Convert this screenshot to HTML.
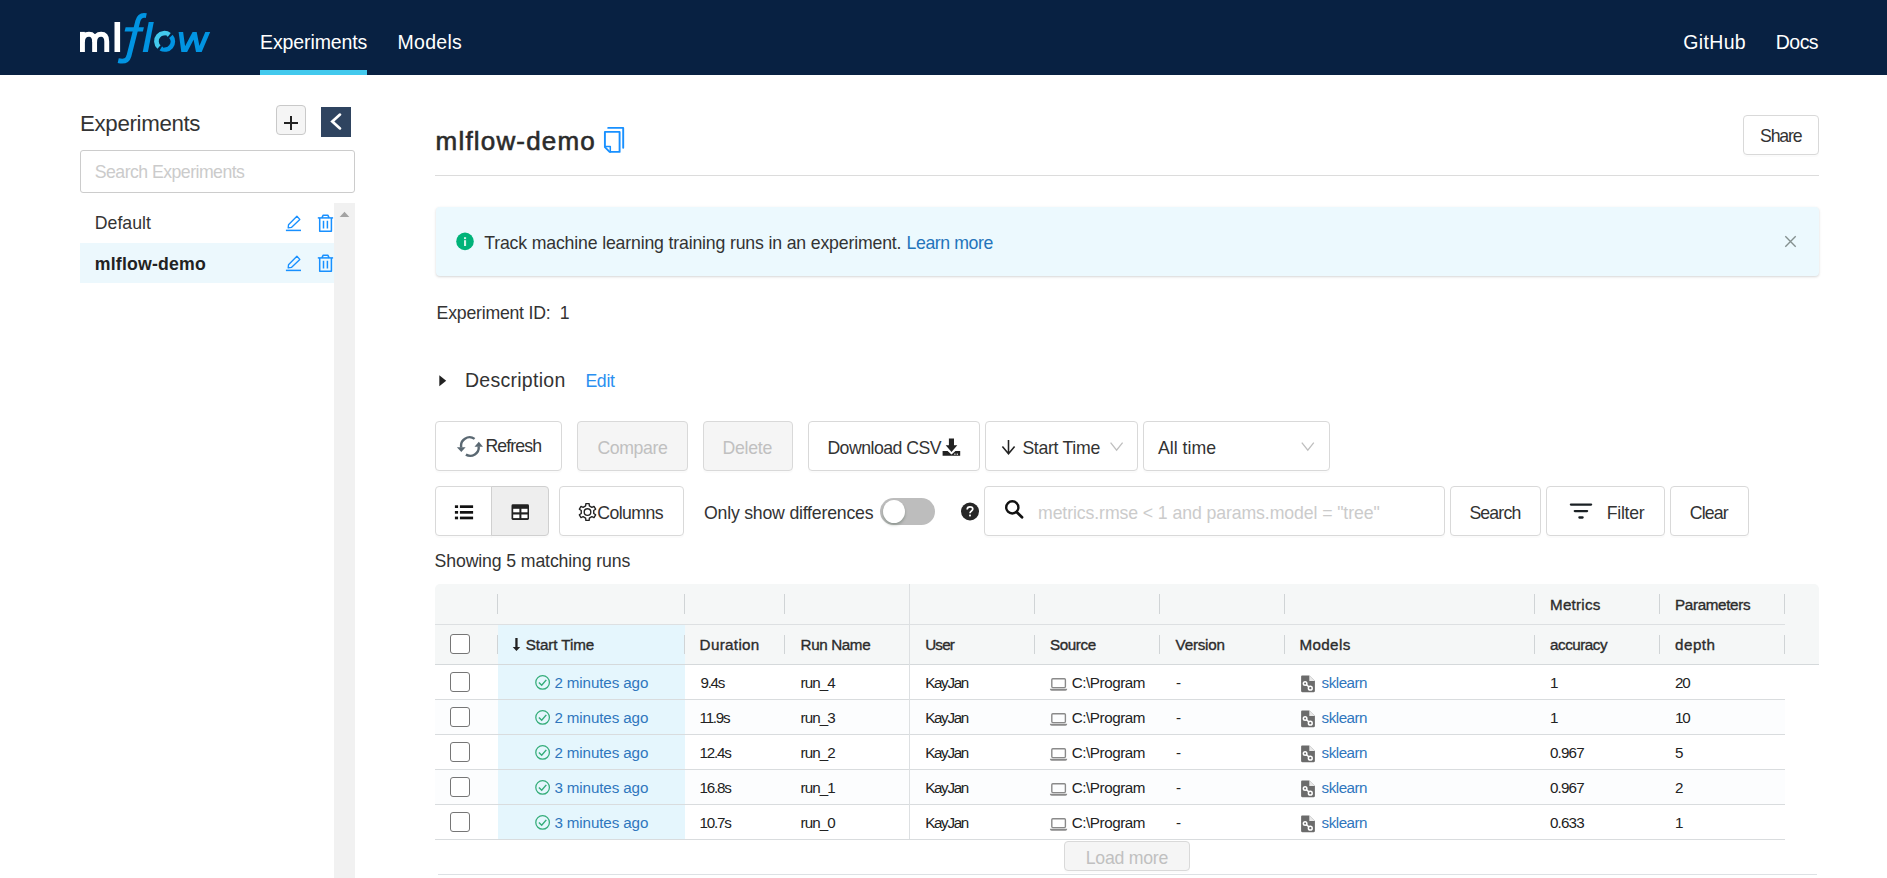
<!DOCTYPE html>
<html>
<head>
<meta charset="utf-8">
<title>MLflow</title>
<style>
*{box-sizing:border-box;margin:0;padding:0}
html,body{width:1887px;height:878px;overflow:hidden;background:#fff}
body{font-family:"Liberation Sans",sans-serif;color:#333;position:relative;font-size:17px}
.abs{position:absolute}
.t{position:absolute;white-space:nowrap;line-height:1}
/* header */
#hdr{left:0;top:0;width:1887px;height:75px;background:#082142}
.nav{color:#fff;font-size:19.4px}
#navline{left:260px;top:70px;width:107px;height:5px;background:#43c9ed}
/* sidebar */
#sbtitle{font-size:23.6px;color:#333}
#plus{left:276px;top:105px;width:30px;height:30px;border:1px solid #c9c9c9;border-radius:4px;background:#f5f5f5}
#coll{left:321px;top:107px;width:30px;height:30px;background:#2f4460}
#sbsearch{left:80px;top:150px;width:275px;height:43px;border:1px solid #ccc;border-radius:3px;background:#fff}
#sbtrack{left:334px;top:203px;width:21px;height:675px;background:#f1f1f1}
#sbactive{left:80px;top:243px;width:254px;height:40px;background:#ecf8fd}
/* main */
#title{font-size:26px;font-weight:normal;color:#2b2b2b;-webkit-text-stroke:0.6px #2b2b2b}
#hr1{left:435px;top:175px;width:1384px;height:1px;background:#dcdcdc}
#alert{left:435.5px;top:207px;width:1383px;height:69px;background:#ecf9fe;border-radius:4px;box-shadow:0 1px 2.5px rgba(0,0,0,.17)}
.btn{position:absolute;border:1px solid #d9d9d9;border-radius:4px;background:#fff;box-shadow:0 2px 0 rgba(0,0,0,.015)}
.btn.dis{background:#f5f5f5}
.dis-t{color:#c0c0c0}
.ph{color:#cbcbcb}
a,.lnk{color:#2a8ff0;text-decoration:none}
/* table */
#thead{left:435px;top:584px;width:1384px;height:80px;background:#f5f7f7;border-top-left-radius:5px;border-top-right-radius:5px}
.vsep{position:absolute;width:1px;background:#d0d4d6}
.hline{position:absolute;height:1px;background:#d9dcde}
.th{font-size:14.2px;font-weight:normal;color:#2c2c2c;-webkit-text-stroke:0.35px #2c2c2c}
.td{font-size:14px;color:#222}
.tl{color:#2f76bd}
.cb{position:absolute;width:20px;height:20px;border:1.5px solid #767676;border-radius:3px;background:#fff}
.odd{position:absolute;left:435px;width:1350px;height:34px;background:#fcfdfe}
/*CAL*/
#n1{left:260.00px !important;top:33.02px !important;font-size:19.5px !important;letter-spacing:-0.100px}
#n2{left:397.60px !important;top:33.02px !important;font-size:19.5px !important;letter-spacing:0.280px}
#n3{left:1683.19px !important;top:33.02px !important;font-size:19.5px !important;letter-spacing:0.360px}
#n4{left:1775.79px !important;top:33.02px !important;font-size:19.5px !important;letter-spacing:-0.533px}
#sbtitle{left:80.00px !important;top:113.02px !important;font-size:22.3px !important;letter-spacing:-0.340px}
#sbph{left:94.79px !important;top:164.02px !important;font-size:17.7px !important;letter-spacing:-0.535px}
#sb1{left:94.79px !important;top:215.02px !important;font-size:17.7px !important;letter-spacing:0.000px}
#sb2{left:94.79px !important;top:256.02px !important;font-size:17.7px !important;letter-spacing:0.200px}
#title{left:435.60px !important;top:128.02px !important;font-size:26px !important;letter-spacing:1.180px}
#share{left:1760.00px !important;top:128.02px !important;font-size:17.7px !important;letter-spacing:-1.150px}
#expid{left:436.60px !important;top:305.02px !important;font-size:17.7px !important;letter-spacing:-0.225px}
#desc{left:465.00px !important;top:371.02px !important;font-size:19.5px !important;letter-spacing:0.270px}
#edit{left:585.39px !important;top:373.02px !important;font-size:17.7px !important;letter-spacing:-0.300px}
#showing{left:434.60px !important;top:553.02px !important;font-size:17.7px !important;letter-spacing:-0.132px}
#b_refresh{left:485.39px !important;top:438.02px !important;font-size:17.7px !important;letter-spacing:-0.883px}
#b_compare{left:597.39px !important;top:440.02px !important;font-size:17.7px !important;letter-spacing:-0.367px}
#b_delete{left:722.39px !important;top:440.02px !important;font-size:17.7px !important;letter-spacing:-0.240px}
#b_dl{left:827.39px !important;top:440.02px !important;font-size:17.7px !important;letter-spacing:-0.527px}
#s_start{left:1022.39px !important;top:440.02px !important;font-size:17.7px !important;letter-spacing:-0.300px}
#s_all{left:1158.00px !important;top:440.02px !important;font-size:17.7px !important;letter-spacing:0.000px}
#b_cols{left:597.19px !important;top:505.02px !important;font-size:17.7px !important;letter-spacing:-0.583px}
#osd{left:704.00px !important;top:505.02px !important;font-size:17.7px !important;letter-spacing:-0.210px}
#ph2{left:1038.00px !important;top:505.02px !important;font-size:17.7px !important;letter-spacing:-0.100px}
#b_search{left:1469.39px !important;top:505.02px !important;font-size:17.7px !important;letter-spacing:-0.840px}
#b_filter{left:1606.79px !important;top:505.02px !important;font-size:17.7px !important;letter-spacing:-0.300px}
#b_clear{left:1689.79px !important;top:505.02px !important;font-size:17.7px !important;letter-spacing:-0.875px}
#loadmore{left:1085.79px !important;top:850.02px !important;font-size:17.7px !important;letter-spacing:-0.250px}
#altxt{left:484.19px !important;top:235.02px !important;font-size:17.7px !important;letter-spacing:-0.164px}
#learn{left:906.60px !important;top:235.02px !important;font-size:17.7px !important;letter-spacing:-0.411px}
#h_metrics{left:1550.00px !important;top:597.02px !important;font-size:15.2px !important;letter-spacing:0.233px}
#h_params{left:1675.00px !important;top:597.02px !important;font-size:15.2px !important;letter-spacing:-0.333px}
#h_start{left:525.79px !important;top:637.02px !important;font-size:15.2px !important;letter-spacing:-0.078px}
#h_dur{left:699.60px !important;top:637.02px !important;font-size:15.2px !important;letter-spacing:0.329px}
#h_run{left:800.60px !important;top:637.02px !important;font-size:15.2px !important;letter-spacing:-0.371px}
#h_user{left:925.19px !important;top:637.02px !important;font-size:15.2px !important;letter-spacing:-0.800px}
#h_src{left:1050.00px !important;top:637.02px !important;font-size:15.2px !important;letter-spacing:-0.400px}
#h_ver{left:1175.60px !important;top:637.02px !important;font-size:15.2px !important;letter-spacing:-0.217px}
#h_mod{left:1299.39px !important;top:637.02px !important;font-size:15.2px !important;letter-spacing:0.400px}
#h_acc{left:1550.00px !important;top:637.02px !important;font-size:15.2px !important;letter-spacing:-0.457px}
#h_depth{left:1675.00px !important;top:637.02px !important;font-size:15.2px !important;letter-spacing:0.500px}
#r0_min{left:554.39px !important;top:675.02px !important;font-size:15.2px !important;letter-spacing:-0.117px}
#r0_run{left:800.60px !important;top:675.02px !important;font-size:15.2px !important;letter-spacing:-0.950px}
#r0_user{left:925.19px !important;top:675.02px !important;font-size:15.2px !important;letter-spacing:-1.320px}
#r0_sk{left:1321.60px !important;top:675.02px !important;font-size:15.2px !important;letter-spacing:-0.500px}
#r0_dur{left:700.60px !important;top:675.02px !important;font-size:15.2px !important;letter-spacing:-1.333px}
#r0_src{left:1071.79px !important;top:675.02px !important;font-size:15.2px !important;letter-spacing:-0.444px}
#r0_ver{left:1176.00px !important;top:675.02px !important;font-size:15.2px !important;letter-spacing:0.000px}
#r0_acc{left:1550.00px !important;top:675.02px !important;font-size:15.2px !important;letter-spacing:0.000px}
#r0_dep{left:1675.00px !important;top:675.02px !important;font-size:15.2px !important;letter-spacing:-1.200px}
#r1_min{left:554.39px !important;top:710.02px !important;font-size:15.2px !important;letter-spacing:-0.117px}
#r1_run{left:800.60px !important;top:710.02px !important;font-size:15.2px !important;letter-spacing:-0.950px}
#r1_user{left:925.19px !important;top:710.02px !important;font-size:15.2px !important;letter-spacing:-1.320px}
#r1_sk{left:1321.60px !important;top:710.02px !important;font-size:15.2px !important;letter-spacing:-0.500px}
#r1_dur{left:699.60px !important;top:710.02px !important;font-size:15.2px !important;letter-spacing:-1.250px}
#r1_src{left:1071.79px !important;top:710.02px !important;font-size:15.2px !important;letter-spacing:-0.444px}
#r1_ver{left:1176.00px !important;top:710.02px !important;font-size:15.2px !important;letter-spacing:0.000px}
#r1_acc{left:1550.00px !important;top:710.02px !important;font-size:15.2px !important;letter-spacing:0.000px}
#r1_dep{left:1675.00px !important;top:710.02px !important;font-size:15.2px !important;letter-spacing:-1.200px}
#r2_min{left:554.39px !important;top:745.02px !important;font-size:15.2px !important;letter-spacing:-0.117px}
#r2_run{left:800.60px !important;top:745.02px !important;font-size:15.2px !important;letter-spacing:-0.950px}
#r2_user{left:925.19px !important;top:745.02px !important;font-size:15.2px !important;letter-spacing:-1.320px}
#r2_sk{left:1321.60px !important;top:745.02px !important;font-size:15.2px !important;letter-spacing:-0.500px}
#r2_dur{left:699.60px !important;top:745.02px !important;font-size:15.2px !important;letter-spacing:-1.250px}
#r2_src{left:1071.79px !important;top:745.02px !important;font-size:15.2px !important;letter-spacing:-0.444px}
#r2_ver{left:1176.00px !important;top:745.02px !important;font-size:15.2px !important;letter-spacing:0.000px}
#r2_acc{left:1550.00px !important;top:745.02px !important;font-size:15.2px !important;letter-spacing:-0.850px}
#r2_dep{left:1675.00px !important;top:745.02px !important;font-size:15.2px !important;letter-spacing:0.000px}
#r3_min{left:554.39px !important;top:780.02px !important;font-size:15.2px !important;letter-spacing:-0.117px}
#r3_run{left:800.60px !important;top:780.02px !important;font-size:15.2px !important;letter-spacing:-0.950px}
#r3_user{left:925.19px !important;top:780.02px !important;font-size:15.2px !important;letter-spacing:-1.320px}
#r3_sk{left:1321.60px !important;top:780.02px !important;font-size:15.2px !important;letter-spacing:-0.500px}
#r3_dur{left:699.60px !important;top:780.02px !important;font-size:15.2px !important;letter-spacing:-1.250px}
#r3_src{left:1071.79px !important;top:780.02px !important;font-size:15.2px !important;letter-spacing:-0.444px}
#r3_ver{left:1176.00px !important;top:780.02px !important;font-size:15.2px !important;letter-spacing:0.000px}
#r3_acc{left:1550.00px !important;top:780.02px !important;font-size:15.2px !important;letter-spacing:-0.850px}
#r3_dep{left:1675.00px !important;top:780.02px !important;font-size:15.2px !important;letter-spacing:0.000px}
#r4_min{left:554.39px !important;top:815.02px !important;font-size:15.2px !important;letter-spacing:-0.117px}
#r4_run{left:800.60px !important;top:815.02px !important;font-size:15.2px !important;letter-spacing:-0.950px}
#r4_user{left:925.19px !important;top:815.02px !important;font-size:15.2px !important;letter-spacing:-1.320px}
#r4_sk{left:1321.60px !important;top:815.02px !important;font-size:15.2px !important;letter-spacing:-0.500px}
#r4_dur{left:699.60px !important;top:815.02px !important;font-size:15.2px !important;letter-spacing:-1.250px}
#r4_src{left:1071.79px !important;top:815.02px !important;font-size:15.2px !important;letter-spacing:-0.444px}
#r4_ver{left:1176.00px !important;top:815.02px !important;font-size:15.2px !important;letter-spacing:0.000px}
#r4_acc{left:1550.00px !important;top:815.02px !important;font-size:15.2px !important;letter-spacing:-0.850px}
#r4_dep{left:1675.00px !important;top:815.02px !important;font-size:15.2px !important;letter-spacing:0.000px}
/*ENDCAL*/
</style>
</head>
<body>
<!-- HEADER -->
<div class="abs" id="hdr"></div>
<div class="abs" id="navline"></div>
<div class="t nav" id="n1" style="left:260px;top:32px">Experiments</div>
<div class="t nav" id="n2" style="left:398px;top:32px">Models</div>
<div class="t nav" id="n3" style="left:1683px;top:32px">GitHub</div>
<div class="t nav" id="n4" style="left:1776px;top:32px">Docs</div>
<svg class="abs" style="left:70px;top:5px" width="150" height="70" viewBox="70 5 150 70">
<g fill="none" stroke="#fff" stroke-width="4.9">
<path d="M82.45,52 V31.9"/>
<path d="M82.45,42 C82.45,36.3 85.6,34.2 89,34.2 C92.6,34.2 94.6,36.6 94.6,41.4 V52"/>
<path d="M94.6,42 C94.6,36.3 97.8,34.2 101.1,34.2 C104.8,34.2 106.75,36.6 106.75,41.4 V52"/>
</g>
<rect x="114.5" y="22" width="5.6" height="30" fill="#fff"/>
<g fill="none" stroke="#0194e2" stroke-width="4.9">
<path d="M146.3,15.6 C141.5,14.6 139,16.6 137.8,21.2 L128.9,56 C127.6,60.6 124.4,62 118.2,60.6"/>
</g>
<polygon points="125.6,27.3 143.9,27.3 142.9,31.4 124.6,31.4" fill="#0194e2"/>
<polygon points="148.7,22 153.8,22 147.9,52 142.7,52" fill="#0194e2"/>
<g fill="none" stroke-width="4.7">
<path d="M169.3,34.9 A7.95,7.95 0 0 0 159,47" stroke="#43c9ed"/>
<path d="M170.9,36.4 A7.95,7.95 0 0 1 160.8,48.4" stroke="#0194e2"/>
</g>
<polygon points="162.6,36.2 166.6,35.2 165.8,39.2" fill="#082142"/>
<polygon points="167,46.8 163,47.8 163.8,43.8" fill="#082142"/>
<clipPath id="wc"><rect x="176" y="32.1" width="40" height="19.9"/></clipPath>
<polyline clip-path="url(#wc)" points="180.6,30 183.8,53.5 194.6,33 198.6,53.5 208.6,30" fill="none" stroke="#0194e2" stroke-width="4.5" stroke-linejoin="miter" stroke-miterlimit="10"/>
</svg>
<!-- SIDEBAR -->
<div class="t" id="sbtitle" style="left:80px;top:111px">Experiments</div>
<div class="abs" id="plus"></div>
<div class="abs" id="coll"></div>
<div class="abs" id="sbsearch"></div>
<div class="t ph" id="sbph" style="left:95px;top:163px;font-size:16.5px">Search Experiments</div>
<div class="abs" id="sbtrack"></div>
<div class="abs" id="sbactive"></div>
<div class="t" id="sb1" style="left:95px;top:214px;font-size:17px">Default</div>
<div class="t" id="sb2" style="left:95px;top:254px;font-size:17px;font-weight:bold;color:#222">mlflow-demo</div>
<svg class="abs" style="left:285px;top:215.1px" width="17" height="18" viewBox="0 0 17 18"><g fill="none" stroke="#1890ff" stroke-width="1.35" stroke-linejoin="round"><path d="M11.9,1.3 L14.8,4.4 L6.4,12.4 L3.2,12.9 L3.5,9.7 Z"/><path d="M0.9,15.4 H16" stroke-width="1.5"/></g></svg><svg class="abs" style="left:317px;top:213.6px" width="17" height="19" viewBox="0 0 17 19"><g fill="none" stroke="#1890ff" stroke-width="1.5" stroke-linejoin="round"><path d="M0.8,3.9 H16.1"/><path d="M4.9,3.9 L6.2,1.2 H10.8 L12.1,3.9"/><path d="M2.7,3.9 V17.2 H14.4 V3.9"/><path d="M6.5,6.8 V14.4 M10.4,6.8 V14.4" stroke-width="1.5"/></g></svg><svg class="abs" style="left:285px;top:255.1px" width="17" height="18" viewBox="0 0 17 18"><g fill="none" stroke="#1890ff" stroke-width="1.35" stroke-linejoin="round"><path d="M11.9,1.3 L14.8,4.4 L6.4,12.4 L3.2,12.9 L3.5,9.7 Z"/><path d="M0.9,15.4 H16" stroke-width="1.5"/></g></svg><svg class="abs" style="left:317px;top:253.6px" width="17" height="19" viewBox="0 0 17 19"><g fill="none" stroke="#1890ff" stroke-width="1.5" stroke-linejoin="round"><path d="M0.8,3.9 H16.1"/><path d="M4.9,3.9 L6.2,1.2 H10.8 L12.1,3.9"/><path d="M2.7,3.9 V17.2 H14.4 V3.9"/><path d="M6.5,6.8 V14.4 M10.4,6.8 V14.4" stroke-width="1.5"/></g></svg><svg class="abs" style="left:339px;top:211px" width="11" height="7" viewBox="0 0 11 7"><polygon points="5.5,0.8 10.3,5.9 0.7,5.9" fill="#a3a3a3"/></svg><div class="abs" style="left:284px;top:121.8px;width:14px;height:2.4px;background:#222"></div><div class="abs" style="left:289.8px;top:116.1px;width:2.5px;height:13.7px;background:#222"></div><svg class="abs" style="left:321px;top:107px" width="30" height="30" viewBox="321 107 30 30"><polyline points="340,114.6 332.3,121.5 340,128.4" fill="none" stroke="#fff" stroke-width="2.7" stroke-linecap="round" stroke-linejoin="miter"/></svg>
<!-- MAIN -->
<div class="t" id="title" style="left:435px;top:127px">mlflow-demo</div>
<svg class="abs" style="left:602px;top:125px" width="24" height="30" viewBox="602 125 24 30"><g fill="none" stroke="#1890ff" stroke-width="1.9" stroke-linejoin="round" stroke-linecap="round"><path d="M608.2,127.9 H623.2 V147.8"/><path d="M604.9,131.9 H619.6 V151.9 H609.6 L604.9,147.2 Z"/><path d="M604.9,146.6 H610.3 V151.9" stroke-width="1.5"/></g></svg>
<div class="btn" style="left:1743px;top:115px;width:76px;height:40px"></div>
<div class="t" id="share" style="left:1760px;top:126px;font-size:17.5px">Share</div>
<div class="abs" id="hr1"></div>
<div class="abs" id="alert"></div>
<div class="t" id="altxt" style="left:484px;top:234px;font-size:17px">Track machine learning training runs in an experiment.</div>
<div class="t" id="learn" style="left:908px;top:234px;font-size:17px;color:#2374bb">Learn more</div>
<svg class="abs" style="left:455px;top:232px" width="20" height="20" viewBox="455 232 20 20"><circle cx="465" cy="241.4" r="8.8" fill="#00b379"/><rect x="464" y="237.2" width="2.1" height="1.9" fill="#d4f3e6"/><rect x="464" y="240.2" width="2.1" height="5.8" fill="#d4f3e6"/></svg>
<svg class="abs" style="left:1783px;top:234px" width="15" height="15" viewBox="1783 234 15 15"><path d="M1785.3,236.2 L1795.7,246.8 M1795.7,236.2 L1785.3,246.8" stroke="#84908f" stroke-width="1.35" fill="none"/></svg>
<svg class="abs" style="left:437px;top:374px" width="10" height="13" viewBox="0 0 10 13"><polygon points="2.3,1.2 9.2,6.7 2.3,12.2" fill="#222"/></svg>
<div class="t" id="expid" style="left:436px;top:304px;font-size:17px">Experiment ID:&nbsp; 1</div>
<div class="t" id="desc" style="left:465px;top:369px;font-size:20.5px">Description</div>
<div class="t lnk" id="edit" style="left:586px;top:372px;font-size:17.5px">Edit</div>
<div class="btn" style="left:435px;top:421px;width:127px;height:50px"></div>
<svg class="abs" style="left:455px;top:435px" width="30" height="24" viewBox="455 435 30 24"><g fill="none" stroke="#5a6872" stroke-width="2.4"><path d="M474.6,438.9 A8.5,8.5 0 0 0 461.3,447.6"/><path d="M465.9,454.6 A8.5,8.5 0 0 0 478.7,446.4"/></g><polygon points="456.9,447.2 465.6,447.2 461.3,451.9" fill="#5a6872"/><polygon points="474.5,446.7 483,446.7 478.8,441.8" fill="#5a6872"/></svg>
<div class="t" id="b_refresh" style="left:486px;top:437px;font-size:17px">Refresh</div>
<div class="btn dis" style="left:577px;top:421px;width:111px;height:50px"></div>
<div class="t dis-t" id="b_compare" style="left:597px;top:439px;font-size:17px">Compare</div>
<div class="btn dis" style="left:703px;top:421px;width:90px;height:50px"></div>
<div class="t dis-t" id="b_delete" style="left:723px;top:439px;font-size:17px">Delete</div>
<div class="btn" style="left:808px;top:421px;width:172px;height:50px"></div>
<div class="t" id="b_dl" style="left:828px;top:439px;font-size:17px">Download CSV</div>
<svg class="abs" style="left:942px;top:438px" width="19" height="18" viewBox="942 438 19 18"><path d="M948.9,438.4 H954 V445.3 H957.3 L951.5,452 L945.7,445.3 H948.9 Z" fill="#222"/><path d="M942.6,450.9 H947.6 L951.5,454.6 L955.4,450.9 H960.2 V455.8 H942.6 Z" fill="#222"/><rect x="956.7" y="453.6" width="1.2" height="1.2" fill="#fff"/><rect x="954.3" y="453.6" width="1.2" height="1.2" fill="#fff"/></svg>
<div class="btn" style="left:985px;top:421px;width:153px;height:50px"></div>
<svg class="abs" style="left:1000px;top:438px" width="18" height="18" viewBox="1000 438 18 18"><path d="M1008.5,440 V453.6 M1002.4,446.6 L1008.5,453.8 L1014.6,446.6" fill="none" stroke="#222" stroke-width="1.55"/></svg>
<div class="t" id="s_start" style="left:1022px;top:439px;font-size:17px">Start Time</div>
<svg class="abs" style="left:1109px;top:441px" width="16" height="12" viewBox="1109 441 16 12"><path d="M1110.6,442.6 L1116.6,450.2 L1122.6,442.6" fill="none" stroke="#bfbfbf" stroke-width="1.3"/></svg>
<div class="btn" style="left:1143px;top:421px;width:187px;height:50px"></div>
<div class="t" id="s_all" style="left:1158px;top:439px;font-size:17px">All time</div>
<svg class="abs" style="left:1300px;top:441px" width="16" height="12" viewBox="1300 441 16 12"><path d="M1301.8,442.6 L1307.8,450.2 L1313.8,442.6" fill="none" stroke="#bfbfbf" stroke-width="1.3"/></svg>
<div class="btn" style="left:435px;top:486px;width:57px;height:50px;border-radius:4px 0 0 4px"></div>
<div class="btn" style="left:491px;top:486px;width:58px;height:50px;border-radius:0 4px 4px 0;background:#eee;border-color:#d0d0d0"></div>
<svg class="abs" style="left:454px;top:504px" width="20" height="17" viewBox="454 504 20 17"><g fill="#111"><rect x="454.9" y="505.3" width="3.2" height="2.7"/><rect x="459.9" y="505.3" width="13.2" height="2.7"/><rect x="454.9" y="511" width="3.2" height="2.7"/><rect x="459.9" y="511" width="13.2" height="2.7"/><rect x="454.9" y="516.6" width="3.2" height="2.7"/><rect x="459.9" y="516.6" width="13.2" height="2.7"/></g></svg>
<svg class="abs" style="left:511px;top:504px" width="19" height="17" viewBox="511 504 19 17"><rect x="511.5" y="504.3" width="17.5" height="15.6" rx="1.4" fill="#222"/><g fill="#fff"><rect x="513.2" y="508.8" width="6.2" height="3.5"/><rect x="521.4" y="508.8" width="6.1" height="3.5"/><rect x="513.2" y="514.5" width="6.2" height="3.6"/><rect x="521.4" y="514.5" width="6.1" height="3.6"/></g></svg>
<div class="btn" style="left:559px;top:486px;width:125px;height:50px"></div>
<svg class="abs" style="left:578px;top:502px" width="19" height="20" viewBox="-9.5 -10 19 20"><g fill="none" stroke="#222" stroke-width="1.35" stroke-linejoin="round"><path d="M-1.87,-6.12 L-1.64,-8.44 L1.64,-8.44 L1.87,-6.12 L4.36,-4.68 L6.49,-5.64 L8.13,-2.80 L6.24,-1.44 L6.24,1.44 L8.13,2.80 L6.49,5.64 L4.36,4.68 L1.87,6.12 L1.64,8.44 L-1.64,8.44 L-1.87,6.12 L-4.36,4.68 L-6.49,5.64 L-8.13,2.80 L-6.24,1.44 L-6.24,-1.44 L-8.13,-2.80 L-6.49,-5.64 L-4.36,-4.68 Z"/><circle cx="0" cy="0" r="3.3"/></g></svg>
<div class="t" id="b_cols" style="left:597px;top:504px;font-size:17px">Columns</div>
<div class="t" id="osd" style="left:704px;top:504px;font-size:17px">Only show differences</div>
<div class="abs" style="left:880px;top:498px;width:55px;height:27px;border-radius:14px;background:#bdbdbd"></div>
<div class="abs" style="left:883px;top:500px;width:22px;height:23px;border-radius:50%;background:#fff;box-shadow:0 2px 3px rgba(0,35,11,.25)"></div>
<svg class="abs" style="left:960px;top:502px" width="20" height="20" viewBox="960 502 20 20"><circle cx="970" cy="511.5" r="9" fill="#262626"/><path d="M967.2,509.4 C967.2,507.6 968.5,506.8 970,506.8 C971.6,506.8 972.8,507.7 972.8,509.1 C972.8,511 970,511 970,513.2" fill="none" stroke="#fff" stroke-width="1.7"/><rect x="969.1" y="514.6" width="1.8" height="1.8" fill="#fff"/></svg>
<div class="btn" style="left:984px;top:486px;width:461px;height:50px"></div>
<svg class="abs" style="left:1004px;top:499px" width="21" height="21" viewBox="1004 499 21 21"><circle cx="1012.3" cy="507.4" r="6.1" fill="none" stroke="#111" stroke-width="2.4"/><path d="M1016.6,511.9 L1022,517.2" stroke="#111" stroke-width="2.8" stroke-linecap="round"/></svg>
<div class="t ph" id="ph2" style="left:1039px;top:504px;font-size:17px">metrics.rmse &lt; 1 and params.model = "tree"</div>
<div class="btn" style="left:1450px;top:486px;width:91px;height:50px"></div>
<div class="t" id="b_search" style="left:1470px;top:504px;font-size:17px">Search</div>
<div class="btn" style="left:1546px;top:486px;width:119px;height:50px"></div>
<svg class="abs" style="left:1568px;top:502px" width="26" height="18" viewBox="1568 502 26 18"><g stroke="#1a2024" stroke-width="2.3" stroke-linecap="round"><path d="M1570.9,504.6 H1591.1"/><path d="M1574.8,511.1 H1587.1"/><path d="M1579.4,517.5 H1582.6"/></g></svg>
<div class="t" id="b_filter" style="left:1607px;top:504px;font-size:17px">Filter</div>
<div class="btn" style="left:1670px;top:486px;width:79px;height:50px"></div>
<div class="t" id="b_clear" style="left:1690px;top:504px;font-size:17px">Clear</div>
<div class="t" id="showing" style="left:435px;top:552px;font-size:17px">Showing 5 matching runs</div>
<div class="abs" id="thead"></div>
<div class="odd" style="top:700px"></div>
<div class="odd" style="top:770px"></div>
<div class="abs" style="left:498px;top:625px;width:187px;height:214px;background:#e5f6fd"></div>
<div class="hline" style="left:435px;top:624px;width:1350px;background:#dde0e2"></div>
<div class="hline" style="left:435px;top:664px;width:1384px;background:#d5d9db"></div>
<div class="hline" style="left:435px;top:699px;width:1350px"></div>
<div class="hline" style="left:435px;top:734px;width:1350px"></div>
<div class="hline" style="left:435px;top:769px;width:1350px"></div>
<div class="hline" style="left:435px;top:804px;width:1350px"></div>
<div class="hline" style="left:435px;top:839px;width:1350px"></div>
<div class="vsep" style="left:909px;top:584px;height:255px;background:#dde0e2"></div>
<div class="vsep" style="left:497px;top:594px;height:20px"></div>
<div class="vsep" style="left:497px;top:635px;height:19px"></div>
<div class="vsep" style="left:684px;top:594px;height:20px"></div>
<div class="vsep" style="left:684px;top:635px;height:19px"></div>
<div class="vsep" style="left:784px;top:594px;height:20px"></div>
<div class="vsep" style="left:784px;top:635px;height:19px"></div>
<div class="vsep" style="left:1034px;top:594px;height:20px"></div>
<div class="vsep" style="left:1034px;top:635px;height:19px"></div>
<div class="vsep" style="left:1159px;top:594px;height:20px"></div>
<div class="vsep" style="left:1159px;top:635px;height:19px"></div>
<div class="vsep" style="left:1284px;top:594px;height:20px"></div>
<div class="vsep" style="left:1284px;top:635px;height:19px"></div>
<div class="vsep" style="left:1534px;top:594px;height:20px"></div>
<div class="vsep" style="left:1534px;top:635px;height:19px"></div>
<div class="vsep" style="left:1659px;top:594px;height:20px"></div>
<div class="vsep" style="left:1659px;top:635px;height:19px"></div>
<div class="vsep" style="left:1784px;top:594px;height:20px"></div>
<div class="vsep" style="left:1784px;top:635px;height:19px"></div>
<div class="t th" id="h_metrics" style="left:1550px;top:598px">Metrics</div>
<div class="t th" id="h_params" style="left:1675px;top:598px">Parameters</div>
<svg class="abs" style="left:512px;top:637px" width="9" height="15" viewBox="512 637 9 15"><path d="M515.3,638.1 H517.6 V646.9 H520.2 L516.45,651.1 L512.7,646.9 H515.3 Z" fill="#222"/></svg>
<div class="t th" id="h_start" style="left:525.4px;top:638px">Start Time</div>
<div class="t th" id="h_dur" style="left:700px;top:638px">Duration</div>
<div class="t th" id="h_run" style="left:800px;top:638px">Run Name</div>
<div class="t th" id="h_user" style="left:925.5px;top:638px">User</div>
<div class="t th" id="h_src" style="left:1050px;top:638px">Source</div>
<div class="t th" id="h_ver" style="left:1175.3px;top:638px">Version</div>
<div class="t th" id="h_mod" style="left:1300.2px;top:638px">Models</div>
<div class="t th" id="h_acc" style="left:1550px;top:638px">accuracy</div>
<div class="t th" id="h_depth" style="left:1675px;top:638px">depth</div>
<div class="cb" style="left:450px;top:634px"></div>
<div class="cb" style="left:450px;top:672px"></div>
<svg class="abs" style="left:534px;top:674px" width="17" height="17" viewBox="0 0 17 17"><circle cx="8.6" cy="8.4" r="6.8" fill="none" stroke="#35ad7a" stroke-width="1.25"/><path d="M4.9,8.6 L7.7,11.3 L12.3,5.9" fill="none" stroke="#35ad7a" stroke-width="1.45"/></svg>
<div class="t td tl c_min" id="r0_min" style="left:554.7px;top:676px">2 minutes ago</div>
<div class="t td c_dur" id="r0_dur" style="left:700px;top:676px">9.4s</div>
<div class="t td c_run" id="r0_run" style="left:800px;top:676px">run_4</div>
<div class="t td c_user" id="r0_user" style="left:925.5px;top:676px">KayJan</div>
<svg class="abs" style="left:1049px;top:677px" width="19" height="15" viewBox="1049 677 19 15"><rect x="1051.8" y="678.7" width="13.6" height="8.9" rx="1" fill="none" stroke="#8a8a8a" stroke-width="1.4"/><path d="M1049.9,688.8 H1067.2 C1067.2,690 1066.5,690.8 1065.4,690.8 H1051.7 C1050.6,690.8 1049.9,690 1049.9,688.8 Z" fill="#8a8a8a"/></svg>
<div class="t td c_src" id="r0_src" style="left:1072.4px;top:676px;">C:\Program</div>
<div class="t td" id="r0_ver" style="left:1176px;top:676px">-</div>
<svg class="abs" style="left:1300px;top:675px" width="16" height="18" viewBox="1300 675 16 18"><path d="M1302.3,675.5 H1309.3 L1314.9,681.1 V691.1 C1314.9,691.8 1314.4,692.3 1313.7,692.3 H1302.3 C1301.6,692.3 1301.1,691.8 1301.1,691.1 V676.7 C1301.1,676 1301.6,675.5 1302.3,675.5 Z" fill="#6b6b6b"/><path d="M1309.3,675.5 L1314.9,681.1 H1309.3 Z" fill="#e9e9e9"/><path d="M1305.1,683.4 L1310.3,688.2" stroke="#fff" stroke-width="1.5"/><circle cx="1305.1" cy="683.4" r="1.75" fill="#6b6b6b" stroke="#fff" stroke-width="1.5"/><circle cx="1310.3" cy="688.2" r="1.9" fill="#6b6b6b" stroke="#fff" stroke-width="1.5"/></svg>
<div class="t td tl c_sk" id="r0_sk" style="left:1321.3px;top:676px">sklearn</div>
<div class="t td c_acc" id="r0_acc" style="left:1550px;top:676px">1</div>
<div class="t td c_dep" id="r0_dep" style="left:1675px;top:676px">20</div>
<div class="cb" style="left:450px;top:707px"></div>
<svg class="abs" style="left:534px;top:709px" width="17" height="17" viewBox="0 0 17 17"><circle cx="8.6" cy="8.4" r="6.8" fill="none" stroke="#35ad7a" stroke-width="1.25"/><path d="M4.9,8.6 L7.7,11.3 L12.3,5.9" fill="none" stroke="#35ad7a" stroke-width="1.45"/></svg>
<div class="t td tl c_min" id="r1_min" style="left:554.7px;top:711px">2 minutes ago</div>
<div class="t td c_dur" id="r1_dur" style="left:700px;top:711px">11.9s</div>
<div class="t td c_run" id="r1_run" style="left:800px;top:711px">run_3</div>
<div class="t td c_user" id="r1_user" style="left:925.5px;top:711px">KayJan</div>
<svg class="abs" style="left:1049px;top:712px" width="19" height="15" viewBox="1049 677 19 15"><rect x="1051.8" y="678.7" width="13.6" height="8.9" rx="1" fill="none" stroke="#8a8a8a" stroke-width="1.4"/><path d="M1049.9,688.8 H1067.2 C1067.2,690 1066.5,690.8 1065.4,690.8 H1051.7 C1050.6,690.8 1049.9,690 1049.9,688.8 Z" fill="#8a8a8a"/></svg>
<div class="t td c_src" id="r1_src" style="left:1072.4px;top:711px;">C:\Program</div>
<div class="t td" id="r1_ver" style="left:1176px;top:711px">-</div>
<svg class="abs" style="left:1300px;top:710px" width="16" height="18" viewBox="1300 675 16 18"><path d="M1302.3,675.5 H1309.3 L1314.9,681.1 V691.1 C1314.9,691.8 1314.4,692.3 1313.7,692.3 H1302.3 C1301.6,692.3 1301.1,691.8 1301.1,691.1 V676.7 C1301.1,676 1301.6,675.5 1302.3,675.5 Z" fill="#6b6b6b"/><path d="M1309.3,675.5 L1314.9,681.1 H1309.3 Z" fill="#e9e9e9"/><path d="M1305.1,683.4 L1310.3,688.2" stroke="#fff" stroke-width="1.5"/><circle cx="1305.1" cy="683.4" r="1.75" fill="#6b6b6b" stroke="#fff" stroke-width="1.5"/><circle cx="1310.3" cy="688.2" r="1.9" fill="#6b6b6b" stroke="#fff" stroke-width="1.5"/></svg>
<div class="t td tl c_sk" id="r1_sk" style="left:1321.3px;top:711px">sklearn</div>
<div class="t td c_acc" id="r1_acc" style="left:1550px;top:711px">1</div>
<div class="t td c_dep" id="r1_dep" style="left:1675px;top:711px">10</div>
<div class="cb" style="left:450px;top:742px"></div>
<svg class="abs" style="left:534px;top:744px" width="17" height="17" viewBox="0 0 17 17"><circle cx="8.6" cy="8.4" r="6.8" fill="none" stroke="#35ad7a" stroke-width="1.25"/><path d="M4.9,8.6 L7.7,11.3 L12.3,5.9" fill="none" stroke="#35ad7a" stroke-width="1.45"/></svg>
<div class="t td tl c_min" id="r2_min" style="left:554.7px;top:746px">2 minutes ago</div>
<div class="t td c_dur" id="r2_dur" style="left:700px;top:746px">12.4s</div>
<div class="t td c_run" id="r2_run" style="left:800px;top:746px">run_2</div>
<div class="t td c_user" id="r2_user" style="left:925.5px;top:746px">KayJan</div>
<svg class="abs" style="left:1049px;top:747px" width="19" height="15" viewBox="1049 677 19 15"><rect x="1051.8" y="678.7" width="13.6" height="8.9" rx="1" fill="none" stroke="#8a8a8a" stroke-width="1.4"/><path d="M1049.9,688.8 H1067.2 C1067.2,690 1066.5,690.8 1065.4,690.8 H1051.7 C1050.6,690.8 1049.9,690 1049.9,688.8 Z" fill="#8a8a8a"/></svg>
<div class="t td c_src" id="r2_src" style="left:1072.4px;top:746px;">C:\Program</div>
<div class="t td" id="r2_ver" style="left:1176px;top:746px">-</div>
<svg class="abs" style="left:1300px;top:745px" width="16" height="18" viewBox="1300 675 16 18"><path d="M1302.3,675.5 H1309.3 L1314.9,681.1 V691.1 C1314.9,691.8 1314.4,692.3 1313.7,692.3 H1302.3 C1301.6,692.3 1301.1,691.8 1301.1,691.1 V676.7 C1301.1,676 1301.6,675.5 1302.3,675.5 Z" fill="#6b6b6b"/><path d="M1309.3,675.5 L1314.9,681.1 H1309.3 Z" fill="#e9e9e9"/><path d="M1305.1,683.4 L1310.3,688.2" stroke="#fff" stroke-width="1.5"/><circle cx="1305.1" cy="683.4" r="1.75" fill="#6b6b6b" stroke="#fff" stroke-width="1.5"/><circle cx="1310.3" cy="688.2" r="1.9" fill="#6b6b6b" stroke="#fff" stroke-width="1.5"/></svg>
<div class="t td tl c_sk" id="r2_sk" style="left:1321.3px;top:746px">sklearn</div>
<div class="t td c_acc" id="r2_acc" style="left:1550px;top:746px">0.967</div>
<div class="t td c_dep" id="r2_dep" style="left:1675px;top:746px">5</div>
<div class="cb" style="left:450px;top:777px"></div>
<svg class="abs" style="left:534px;top:779px" width="17" height="17" viewBox="0 0 17 17"><circle cx="8.6" cy="8.4" r="6.8" fill="none" stroke="#35ad7a" stroke-width="1.25"/><path d="M4.9,8.6 L7.7,11.3 L12.3,5.9" fill="none" stroke="#35ad7a" stroke-width="1.45"/></svg>
<div class="t td tl c_min" id="r3_min" style="left:554.7px;top:781px">3 minutes ago</div>
<div class="t td c_dur" id="r3_dur" style="left:700px;top:781px">16.8s</div>
<div class="t td c_run" id="r3_run" style="left:800px;top:781px">run_1</div>
<div class="t td c_user" id="r3_user" style="left:925.5px;top:781px">KayJan</div>
<svg class="abs" style="left:1049px;top:782px" width="19" height="15" viewBox="1049 677 19 15"><rect x="1051.8" y="678.7" width="13.6" height="8.9" rx="1" fill="none" stroke="#8a8a8a" stroke-width="1.4"/><path d="M1049.9,688.8 H1067.2 C1067.2,690 1066.5,690.8 1065.4,690.8 H1051.7 C1050.6,690.8 1049.9,690 1049.9,688.8 Z" fill="#8a8a8a"/></svg>
<div class="t td c_src" id="r3_src" style="left:1072.4px;top:781px;">C:\Program</div>
<div class="t td" id="r3_ver" style="left:1176px;top:781px">-</div>
<svg class="abs" style="left:1300px;top:780px" width="16" height="18" viewBox="1300 675 16 18"><path d="M1302.3,675.5 H1309.3 L1314.9,681.1 V691.1 C1314.9,691.8 1314.4,692.3 1313.7,692.3 H1302.3 C1301.6,692.3 1301.1,691.8 1301.1,691.1 V676.7 C1301.1,676 1301.6,675.5 1302.3,675.5 Z" fill="#6b6b6b"/><path d="M1309.3,675.5 L1314.9,681.1 H1309.3 Z" fill="#e9e9e9"/><path d="M1305.1,683.4 L1310.3,688.2" stroke="#fff" stroke-width="1.5"/><circle cx="1305.1" cy="683.4" r="1.75" fill="#6b6b6b" stroke="#fff" stroke-width="1.5"/><circle cx="1310.3" cy="688.2" r="1.9" fill="#6b6b6b" stroke="#fff" stroke-width="1.5"/></svg>
<div class="t td tl c_sk" id="r3_sk" style="left:1321.3px;top:781px">sklearn</div>
<div class="t td c_acc" id="r3_acc" style="left:1550px;top:781px">0.967</div>
<div class="t td c_dep" id="r3_dep" style="left:1675px;top:781px">2</div>
<div class="cb" style="left:450px;top:812px"></div>
<svg class="abs" style="left:534px;top:814px" width="17" height="17" viewBox="0 0 17 17"><circle cx="8.6" cy="8.4" r="6.8" fill="none" stroke="#35ad7a" stroke-width="1.25"/><path d="M4.9,8.6 L7.7,11.3 L12.3,5.9" fill="none" stroke="#35ad7a" stroke-width="1.45"/></svg>
<div class="t td tl c_min" id="r4_min" style="left:554.7px;top:816px">3 minutes ago</div>
<div class="t td c_dur" id="r4_dur" style="left:700px;top:816px">10.7s</div>
<div class="t td c_run" id="r4_run" style="left:800px;top:816px">run_0</div>
<div class="t td c_user" id="r4_user" style="left:925.5px;top:816px">KayJan</div>
<svg class="abs" style="left:1049px;top:817px" width="19" height="15" viewBox="1049 677 19 15"><rect x="1051.8" y="678.7" width="13.6" height="8.9" rx="1" fill="none" stroke="#8a8a8a" stroke-width="1.4"/><path d="M1049.9,688.8 H1067.2 C1067.2,690 1066.5,690.8 1065.4,690.8 H1051.7 C1050.6,690.8 1049.9,690 1049.9,688.8 Z" fill="#8a8a8a"/></svg>
<div class="t td c_src" id="r4_src" style="left:1072.4px;top:816px;">C:\Program</div>
<div class="t td" id="r4_ver" style="left:1176px;top:816px">-</div>
<svg class="abs" style="left:1300px;top:815px" width="16" height="18" viewBox="1300 675 16 18"><path d="M1302.3,675.5 H1309.3 L1314.9,681.1 V691.1 C1314.9,691.8 1314.4,692.3 1313.7,692.3 H1302.3 C1301.6,692.3 1301.1,691.8 1301.1,691.1 V676.7 C1301.1,676 1301.6,675.5 1302.3,675.5 Z" fill="#6b6b6b"/><path d="M1309.3,675.5 L1314.9,681.1 H1309.3 Z" fill="#e9e9e9"/><path d="M1305.1,683.4 L1310.3,688.2" stroke="#fff" stroke-width="1.5"/><circle cx="1305.1" cy="683.4" r="1.75" fill="#6b6b6b" stroke="#fff" stroke-width="1.5"/><circle cx="1310.3" cy="688.2" r="1.9" fill="#6b6b6b" stroke="#fff" stroke-width="1.5"/></svg>
<div class="t td tl c_sk" id="r4_sk" style="left:1321.3px;top:816px">sklearn</div>
<div class="t td c_acc" id="r4_acc" style="left:1550px;top:816px">0.633</div>
<div class="t td c_dep" id="r4_dep" style="left:1675px;top:816px">1</div>
<div class="btn dis" style="left:1064px;top:841px;width:126px;height:30px"></div>
<div class="t dis-t" id="loadmore" style="left:1086.4px;top:849px;font-size:17px">Load more</div>
<div class="hline" style="left:437.5px;top:874px;width:1379px;background:#dde1e4"></div>
</body>
</html>
